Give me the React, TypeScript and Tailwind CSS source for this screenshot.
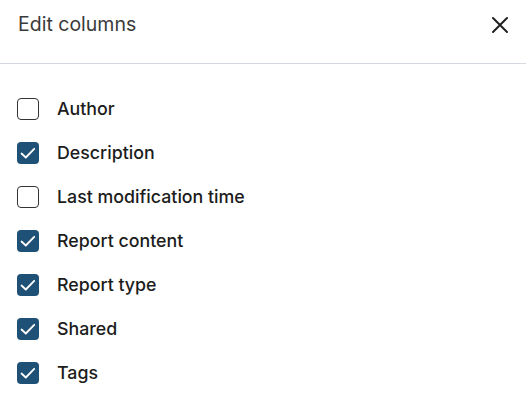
import { useState } from "react";

const initialColumns = [
  { id: "author", label: "Author", checked: false },
  { id: "description", label: "Description", checked: true },
  { id: "lastModified", label: "Last modification time", checked: false },
  { id: "reportContent", label: "Report content", checked: true },
  { id: "reportType", label: "Report type", checked: true },
  { id: "shared", label: "Shared", checked: true },
  { id: "tags", label: "Tags", checked: true },
];

export default function App() {
  const [columns, setColumns] = useState(initialColumns);

  const toggle = (id: string) =>
    setColumns((cols) =>
      cols.map((c) => (c.id === id ? { ...c, checked: !c.checked } : c))
    );

  return (
    <div className="w-[526px] h-[397px] bg-white font-['Inter',sans-serif]">
      <div className="flex items-center justify-between h-[64px] pl-[18px] pr-[17px] pb-[14px] border-b border-[#d3d9df]">
        <h2 className="text-[19.5px] text-[#3a3a3a] font-normal">Edit columns</h2>
        <button className="text-[#222222]" aria-label="Close">
          <svg width="18" height="18" viewBox="0 0 18 18" fill="none">
            <path
              d="M2 2L16 16M16 2L2 16"
              stroke="currentColor"
              strokeWidth="2"
              strokeLinecap="round"
            />
          </svg>
        </button>
      </div>

      <ul className="flex flex-col pt-[23px]">
        {columns.map((col) => (
          <li key={col.id} className="h-[44px] flex items-center">
            <label className="flex items-center pl-[17px] cursor-pointer">
              <button
                onClick={() => toggle(col.id)}
                className={`w-[22px] h-[22px] rounded-[4px] flex items-center justify-center ${
                  col.checked
                    ? "bg-[#1f5176]"
                    : "border-[1.5px] border-[#333333] bg-white"
                }`}
              >
                {col.checked && (
                  <svg width="22" height="22" viewBox="0 0 22 22" fill="none">
                    <path
                      d="M4.5 11.5L8.8 15.5L17.2 6.8"
                      stroke="white"
                      strokeWidth="1.8"
                      strokeLinecap="round"
                      strokeLinejoin="round"
                    />
                  </svg>
                )}
              </button>
              <span className="ml-[18px] text-[17.8px] font-medium text-[#1c1c1c]">
                {col.label}
              </span>
            </label>
          </li>
        ))}
      </ul>
    </div>
  );
}
